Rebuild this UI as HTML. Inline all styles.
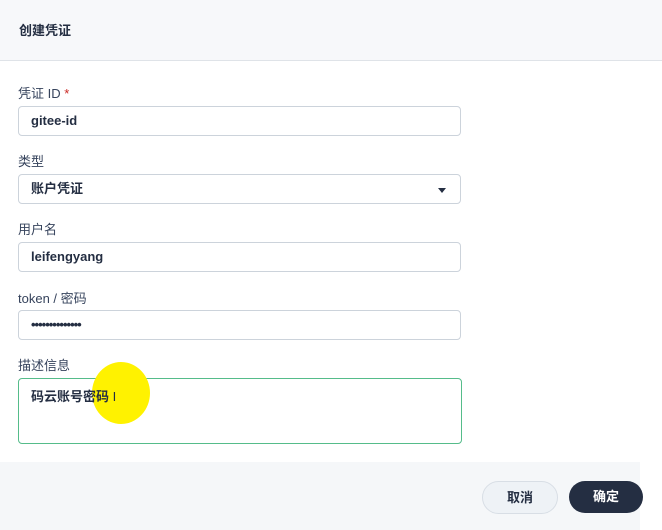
<!DOCTYPE html><html><head><meta charset="utf-8"><style>
body{margin:0;width:662px;height:530px;background:#fff;font-family:"Liberation Sans","Noto Sans CJK SC",sans-serif;position:relative;overflow:hidden;color:#242e42}
.hd{position:absolute;left:0;top:0;width:662px;height:60px;background:#f7f8fa;border-bottom:1px solid #dfe3e8}
.hd span{position:absolute;left:19px;top:20px;font-size:13px;font-weight:bold;color:#242e42}
.lb{position:absolute;left:18px;font-size:13px;color:#36435c}
.in{position:absolute;left:18px;width:441px;height:28px;border:1px solid #ccd3db;border-radius:4px;background:#fff;font-size:13px;font-weight:bold;line-height:28px;text-indent:12px;box-sizing:content-box}
.ft{position:absolute;left:0;top:462px;width:640px;height:68px;background:#f5f7f9}
.b{position:absolute;top:481px;height:32px;border-radius:17px;font-size:13px;font-weight:bold;text-align:center;line-height:32px}
</style></head><body>
<div class="hd"><span>创建凭证</span></div>
<div class="lb" style="top:83px">凭证 ID <span style="color:#ca2621">*</span></div>
<div class="in" style="top:106px">gitee-id</div>
<div class="lb" style="top:151px">类型</div>
<div class="in" style="top:174px">账户凭证<span style="position:absolute;right:14px;top:13px;width:0;height:0;border-left:4px solid transparent;border-right:4px solid transparent;border-top:5px solid #242e42"></span></div>
<div class="lb" style="top:219px">用户名</div>
<div class="in" style="top:242px">leifengyang</div>
<div class="lb" style="top:288px">token / 密码</div>
<div class="in" style="top:310px;letter-spacing:-1px">••••••••••••••</div>
<div class="lb" style="top:355px">描述信息</div>
<div style="position:absolute;left:18px;top:378px;width:442px;height:64px;border:1px solid #55bc8a;border-radius:4px;background:#fff"></div>
<div style="position:absolute;left:92px;top:362px;width:58px;height:62px;border-radius:50%;background:#fff200"></div>
<div style="position:absolute;left:31px;top:386px;font-size:13px;font-weight:bold">码云账号密码 <span style="font-weight:normal">I</span></div>
<div class="ft"></div>
<div class="b" style="left:482px;width:74px;background:#eef2f6;border:1px solid #d8dee5;height:31px;line-height:31px">取消</div>
<div class="b" style="left:569px;width:74px;background:#242e42;color:#fff">确定</div>
</body></html>
